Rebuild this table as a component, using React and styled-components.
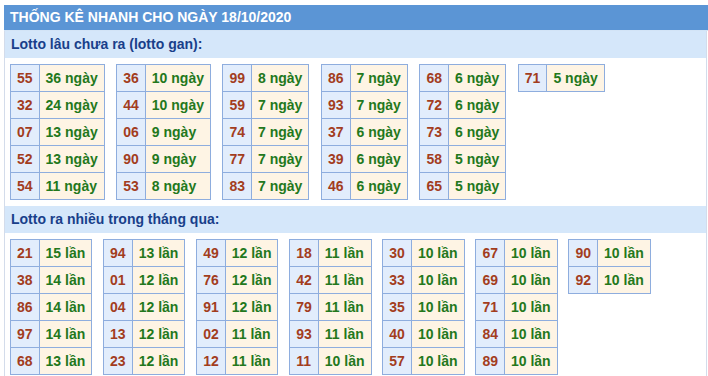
import React from 'react';
import styled, { createGlobalStyle } from 'styled-components';

const GlobalStyle = createGlobalStyle`
  body {
    margin: 0;
    background: #fff;
    font-family: "Liberation Sans", Arial, sans-serif;
  }
`;

const Panel = styled.div`
  margin: 5px 1px 0 4px;
  border-left: 1px solid #d3dceb;
  border-right: 1px solid #d3dceb;
`;

const Title = styled.div`
  background: #5b95d5;
  color: #fff;
  font-size: 14px;
  font-weight: bold;
  height: 25px;
  line-height: 25px;
  padding-left: 6px;
  margin-left: -1px;
  margin-right: -2px;
  border-bottom: 1px solid #d3e4f6;
`;

const SubTitle = styled.div`
  background: #d5e7fa;
  color: #193f8a;
  font-size: 14px;
  font-weight: bold;
  height: 27px;
  line-height: 27px;
  padding-left: 6px;
`;

const Tables = styled.div`
  display: flex;
  flex-wrap: wrap;
  align-items: flex-start;
  gap: ${p => p.$gap}px;
  padding: 6px 5px 6px;
`;

const Table = styled.table`
  border-collapse: collapse;
  font-size: 14px;
  font-weight: bold;
`;

const Cell = styled.td`
  border: 1px solid #8eadde;
  height: 26px;
  padding: 0 6px;
  white-space: nowrap;
  background: ${p => (p.$num ? '#e2edfc' : '#fef4e4')};
  color: ${p => (p.$num ? '#a23d1e' : '#23781c')};
`;

const gan = [
  [[55, 36], [32, 24], ['07', 13], [52, 13], [54, 11]],
  [[36, 10], [44, 10], ['06', 9], [90, 9], [53, 8]],
  [[99, 8], [59, 7], [74, 7], [77, 7], [83, 7]],
  [[86, 7], [93, 7], [37, 6], [39, 6], [46, 6]],
  [[68, 6], [72, 6], [73, 6], [58, 5], [65, 5]],
  [[71, 5]],
];

const nhieu = [
  [[21, 15], [38, 14], [86, 14], [97, 14], [68, 13]],
  [[94, 13], ['01', 12], ['04', 12], [13, 12], [23, 12]],
  [[49, 12], [76, 12], [91, 12], ['02', 11], [12, 11]],
  [[18, 11], [42, 11], [79, 11], [93, 11], [11, 10]],
  [[30, 10], [33, 10], [35, 10], [40, 10], [57, 10]],
  [[67, 10], [69, 10], [71, 10], [84, 10], [89, 10]],
  [[90, 10], [92, 10]],
];

function Group({ data, unit, gap }) {
  return (
    <Tables $gap={gap}>
      {data.map((rows, i) => (
        <Table key={i}>
          <tbody>
            {rows.map(([n, c]) => (
              <tr key={n}>
                <Cell $num>{n}</Cell>
                <Cell>{c} {unit}</Cell>
              </tr>
            ))}
          </tbody>
        </Table>
      ))}
    </Tables>
  );
}

export default function App() {
  return (
    <>
      <GlobalStyle />
      <Panel>
        <Title>THỐNG KÊ NHANH CHO NGÀY 18/10/2020</Title>
        <SubTitle>Lotto lâu chưa ra (lotto gan):</SubTitle>
        <Group data={gan} unit="ngày" gap={11.5} />
        <SubTitle>Lotto ra nhiều trong tháng qua:</SubTitle>
        <Group data={nhieu} unit="lần" gap={10.8} />
      </Panel>
    </>
  );
}
